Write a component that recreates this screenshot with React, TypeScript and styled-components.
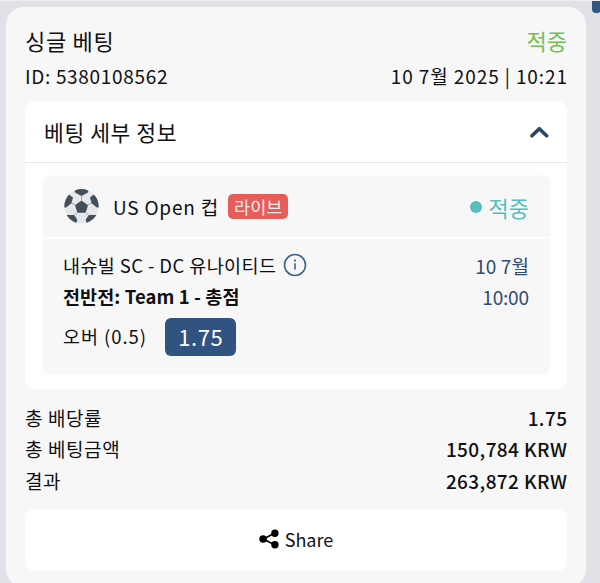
import React from "react";
import styled, { createGlobalStyle } from "styled-components";

const GlobalStyle = createGlobalStyle`
  * { box-sizing: border-box; }
  html, body { margin: 0; height: 583px; overflow: hidden; }
  body {
    background: #e1e2e7;
    color: #101012;
    font-family: "Noto Sans CJK KR", "Noto Sans", sans-serif;
  }
`;

const Page = styled.div`
  position: relative;
  width: 600px;
  height: 583px;
  padding: 6px 14px 0 6px;
  overflow: hidden;
  border-top: 1px solid #eeeff2;
`;

const ScrollThumb = styled.div`
  position: absolute;
  top: -8px;
  right: -1px;
  width: 9px;
  height: 20px;
  border-radius: 4px;
  background: #315681;
`;

const Card = styled.main`
  height: 580px;
  padding: 16px 19px 0;
  border-radius: 18px;
  background: #f7f7f7;
`;

const Row = styled.div<{ $h: number }>`
  display: flex;
  align-items: center;
  justify-content: space-between;
  height: ${(p) => p.$h}px;
`;

const Text = styled.span<{ $size: number; $gap?: number; $weight?: number; $color?: string }>`
  font-size: ${(p) => p.$size}px;
  letter-spacing: ${(p) => p.$gap ?? 0}px;
  margin-right: ${(p) => -(p.$gap ?? 0)}px;
  font-weight: ${(p) => p.$weight ?? 400};
  color: ${(p) => p.$color ?? "inherit"};
  line-height: 1;
  white-space: nowrap;
`;

const Panel = styled.section`
  height: 288px;
  margin-top: 8px;
  border-radius: 10px;
  background: #fff;
`;

const PanelHeader = styled.header`
  display: flex;
  align-items: center;
  justify-content: space-between;
  height: 62px;
  padding: 0 18px 0 19px;
  border-bottom: 1px solid #e6e6e7;
`;

const Bet = styled.article`
  height: 198px;
  margin: 13px 17px 0 18px;
  border-radius: 8px;
  background: #f7f7f7;
  box-shadow: 0 0 10px rgba(0, 0, 0, 0.025);
`;

const BetHeader = styled.div`
  display: flex;
  align-items: center;
  height: 63px;
  padding: 0 21px 0 21px;
  border-bottom: 2px solid #fdfdfd;
`;

const League = styled.div`
  display: flex;
  margin-left: 14px;
`;

const LiveBadge = styled.div`
  display: flex;
  align-items: center;
  justify-content: center;
  width: 60px;
  height: 25px;
  margin-left: 10px;
  border-radius: 5px;
  background: #e65d59;
`;

const Status = styled.div`
  display: flex;
  align-items: center;
  gap: 7px;
  margin-left: auto;
`;

const Dot = styled.i`
  width: 12px;
  height: 12px;
  border-radius: 50%;
  background: #57bdbd;
`;

const BetBody = styled.div`
  padding: 10px 21px 0 20px;
`;

const Inline = styled.div<{ $gap: number }>`
  display: flex;
  align-items: center;
  gap: ${(p) => p.$gap}px;
`;

const Odds = styled.div`
  display: flex;
  align-items: center;
  justify-content: center;
  width: 71px;
  height: 38px;
  padding-bottom: 2px;
  border-radius: 6px;
  background: #30547f;
`;

const Totals = styled.section`
  margin-top: 13px;
`;

const ShareButton = styled.button`
  display: flex;
  align-items: center;
  justify-content: center;
  gap: 6px;
  width: 100%;
  height: 62px;
  margin-top: 13px;
  padding: 0 0 1px;
  border: 0;
  border-radius: 9px;
  background: #fff;
  color: #101012;
  font-family: inherit;
`;

const Ball = () => (
  <svg width="35" height="35" viewBox="0 0 35 35">
    <defs>
      <clipPath id="ball"><circle cx="17.5" cy="17.3" r="17.2" /></clipPath>
    </defs>
    <g clipPath="url(#ball)">
      <circle cx="17.5" cy="17.3" r="17.2" fill="#e5e7ea" />
      <g fill="#43505c">
        <path d="M17.5 11.6 24 16.2 21.6 23.8h-8.2L11 16.2Z" />
        <path d="M10-1h15l-1 4.6-6.5 3.4-6.5-3.4Z" />
        <path d="M-1 18.5V6.5L4.4 5 9 8.5 7.4 14.3 2.2 18.5Z" />
        <path d="M36 18.5V6.5L30.6 5 26 8.5l1.6 5.8 5.2 4.2Z" />
        <path d="M2 26h8.2l3 4.4-1 5.6H2Z" />
        <path d="M33 26h-8.2l-3 4.4 1 5.6H33Z" />
      </g>
      <path d="M17.5 6.5v6M7.5 13.8l4.3 2.6M27.5 13.8l-4.3 2.6M13.6 23.4 10.2 26.5M21.4 23.4l3.4 3.1" stroke="#8d979f" strokeWidth=".8" />
    </g>
  </svg>
);

const InfoIcon = () => (
  <svg width="24" height="24" viewBox="0 0 24 24">
    <circle cx="12" cy="12" r="10.5" fill="none" stroke="#41618a" strokeWidth="1.6" />
    <path d="M12 10.2v6.4" stroke="#41618a" strokeWidth="1.6" />
    <circle cx="12" cy="7.6" r="1.1" fill="#41618a" />
  </svg>
);

const Chevron = () => (
  <svg width="20" height="14" viewBox="0 0 20 14">
    <path d="m3 10.7 7.3-7 7.3 7" fill="none" stroke="#294766" strokeWidth="3.6" strokeLinecap="round" strokeLinejoin="round" />
  </svg>
);

const ShareIcon = () => (
  <svg width="20" height="20" viewBox="0 0 20 20">
    <path d="M15.5 4.2 4.3 10l11.2 5.8" fill="none" stroke="#050505" strokeWidth="1.7" />
    <circle cx="4.1" cy="10" r="3.8" />
    <circle cx="15.9" cy="4.2" r="3.7" />
    <circle cx="15.9" cy="15.8" r="3.7" />
  </svg>
);

const totals = [
  { label: "총 배당률", value: "1.75" },
  { label: "총 베팅금액", value: "150,784 KRW" },
  { label: "결과", value: "263,872 KRW" },
];

export default function App() {
  return (
    <Page>
      <GlobalStyle />
      <ScrollThumb />
      <Card>
        <Row $h={34}>
          <Text $size={22} $gap={0.7}>싱글 베팅</Text>
          <Text $size={22} $color="#73c04d">적중</Text>
        </Row>
        <Row $h={36}>
          <Text $size={19} $gap={0.68}>ID: 5380108562</Text>
          <Text $size={19} $gap={0.9}>10 7월 2025 | 10:21</Text>
        </Row>
        <Panel>
          <PanelHeader>
            <Text $size={21.5} $gap={0.6}>베팅 세부 정보</Text>
            <Chevron />
          </PanelHeader>
          <Bet>
            <BetHeader>
              <Ball />
              <League><Text $size={19} $gap={0.8}>US Open 컵</Text></League>
              <LiveBadge><Text $size={17.5} $color="#fdebea">라이브</Text></LiveBadge>
              <Status>
                <Dot />
                <Text $size={22} $color="#57bdbd">적중</Text>
              </Status>
            </BetHeader>
            <BetBody>
              <Row $h={32}>
                <Inline $gap={7}>
                  <Text $size={18.5} $gap={0.4}>내슈빌 SC - DC 유나이티드</Text>
                  <InfoIcon />
                </Inline>
                <Text $size={19} $gap={0.1} $color="#304c70">10 7월</Text>
              </Row>
              <Row $h={31}>
                <Text $size={18.5} $gap={0.1} $weight={700}>전반전: Team 1 - 총점</Text>
                <Text $size={19} $gap={-0.2} $color="#304c70">10:00</Text>
              </Row>
              <Row $h={49}>
                <Inline $gap={19}>
                  <Text $size={18.5} $gap={0.95}>오버 (0.5)</Text>
                  <Odds><Text $size={22} $gap={0.6} $color="#fff">1.75</Text></Odds>
                </Inline>
              </Row>
            </BetBody>
          </Bet>
        </Panel>
        <Totals>
          {totals.map((t) => (
            <Row $h={31.3} key={t.label}>
              <Text $size={19} $gap={0.6}>{t.label}</Text>
              <Text $size={19} $gap={0.4} $weight={500}>{t.value}</Text>
            </Row>
          ))}
        </Totals>
        <ShareButton>
          <ShareIcon />
          <Text $size={18}>Share</Text>
        </ShareButton>
      </Card>
    </Page>
  );
}
